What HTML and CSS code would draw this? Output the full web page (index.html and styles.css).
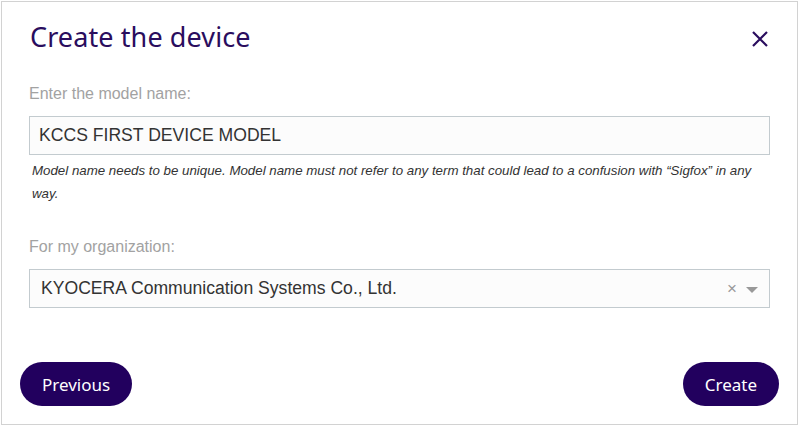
FILE: index.html
```html
<!DOCTYPE html>
<html lang="en">
<head>
    <meta charset="UTF-8">
    <meta name="viewport" content="width=device-width, initial-scale=1.0">
    <title>Create the device</title>
    <link rel="stylesheet" href="styles.css">
</head>
<body>
    <div class="modal">
        <div class="modal-header">
            <h1>Create the device</h1>
            <button class="close-button" aria-label="Close">
                <svg width="18" height="18" viewBox="0 0 18 18">
                    <path d="M2 2 L16 16 M16 2 L2 16" stroke="#2a0d5e" stroke-width="2.2" fill="none"/>
                </svg>
            </button>
        </div>

        <div class="modal-body">
            <div class="form-group">
                <label for="model-name">Enter the model name:</label>
                <input type="text" id="model-name" class="text-input" value="KCCS FIRST DEVICE MODEL">
                <p class="help-text">Model name needs to be unique. Model name must not refer to any term that could lead to a confusion with “Sigfox” in any way.</p>
            </div>

            <div class="form-group">
                <label>For my organization:</label>
                <div class="select-box">
                    <span class="select-value">KYOCERA Communication Systems Co., Ltd.</span>
                    <span class="select-clear">×</span>
                    <span class="select-arrow"></span>
                </div>
            </div>
        </div>

        <div class="modal-footer">
            <button class="pill-button">Previous</button>
            <button class="pill-button">Create</button>
        </div>
    </div>
</body>
</html>
```

FILE: styles.css
```css
* {
    margin: 0;
    padding: 0;
    box-sizing: border-box;
}

body {
    background-color: white;
    font-family: 'Liberation Sans', Arial, sans-serif;
    padding: 1px 2px 2px 1px;
}

.modal {
    border: 1px solid #d2d2d2;
    height: 424px;
    display: flex;
    flex-direction: column;
}

.modal-header {
    display: flex;
    justify-content: space-between;
    align-items: center;
    padding: 16px 28px 0 28px;
}

h1 {
    font-family: 'Noto Sans', sans-serif;
    font-weight: 400;
    font-size: 27px;
    color: #2a0d5e;
    letter-spacing: 0.1px;
}

.close-button {
    background: none;
    border: none;
    cursor: pointer;
    width: 18px;
    height: 18px;
    margin-top: 4px;
}

.modal-body {
    padding: 30px 27px 0 27px;
}

.form-group {
    margin-bottom: 33px;
}

label {
    display: block;
    color: #a2a2a2;
    font-size: 16px;
    margin-bottom: 13px;
}

.text-input {
    width: 100%;
    height: 39px;
    padding: 0 9px;
    border: 1px solid #c3cbcf;
    background-color: #fcfcfc;
    font-family: 'Liberation Sans', Arial, sans-serif;
    font-size: 1.1em;
    color: #333;
    outline: none;
}

.help-text {
    font-size: 13.3px;
    font-style: italic;
    color: #333;
    line-height: 23px;
    padding: 4px 10px 0 3px;
}

.select-box {
    display: flex;
    align-items: center;
    height: 39px;
    padding: 0 10px 0 11px;
    border: 1px solid #c3cbcf;
    background-color: #fcfcfc;
}

.select-value {
    flex: 1;
    font-size: 1.1em;
    color: #333;
}

.select-clear {
    color: #999;
    font-size: 17px;
    margin-right: 9px;
}

.select-arrow {
    width: 0;
    height: 0;
    border-left: 6px solid transparent;
    border-right: 6px solid transparent;
    border-top: 6px solid #999;
    margin-right: 1px;
    margin-top: 2px;
}

.modal-footer {
    margin-top: auto;
    display: flex;
    justify-content: space-between;
    padding: 0 18px 18px 18px;
}

.pill-button {
    background-color: #22005e;
    color: white;
    border: none;
    border-radius: 23px;
    height: 44px;
    padding: 0 22px;
    font-family: 'Noto Sans', sans-serif;
    font-size: 17px;
    cursor: pointer;
}
```
